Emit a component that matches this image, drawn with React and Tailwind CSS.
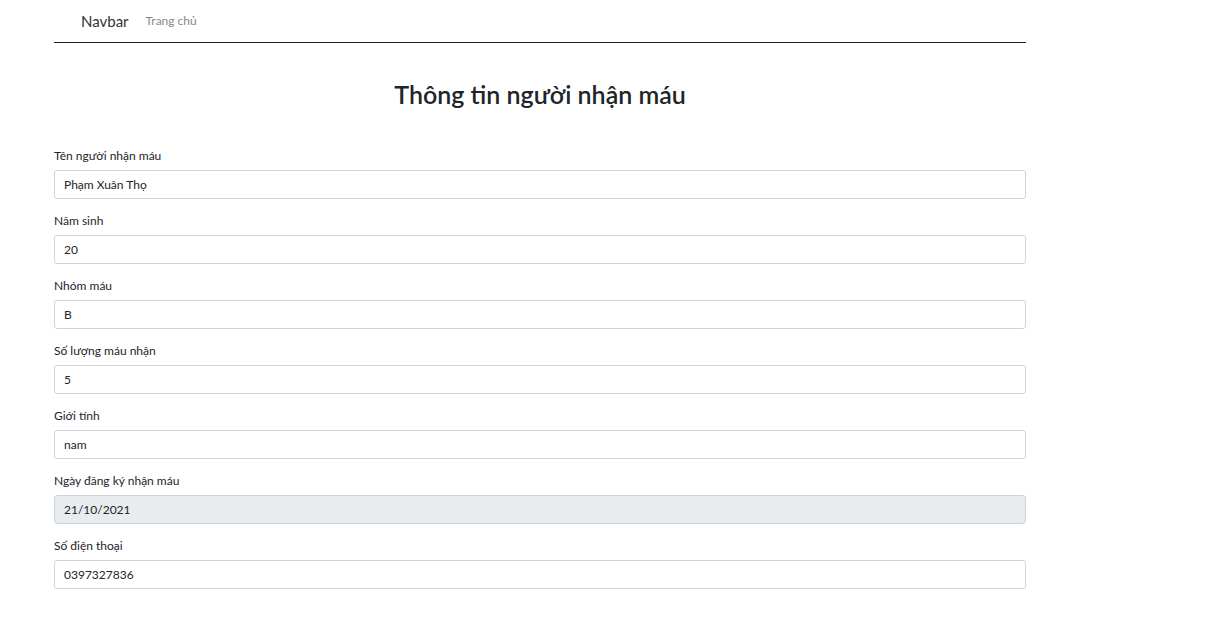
export default function App() {
  const fields = [
    { label: "Tên người nhận máu", value: "Phạm Xuân Thọ" },
    { label: "Năm sinh", value: "20" },
    { label: "Nhóm máu", value: "B" },
    { label: "Số lượng máu nhận", value: "5" },
    { label: "Giới tính", value: "nam" },
    { label: "Ngày đăng ký nhận máu", value: "21/10/2021", disabled: true },
    { label: "Số điện thoại", value: "0397327836" },
  ];
  return (
    <div className="min-h-[623px] w-[1220px] bg-white text-[#212529]" style={{ fontFamily: "Lato, 'Noto Sans', sans-serif" }}>
      <div className="ml-[54px] w-[972px]">
        <nav className="flex h-[43px] items-center border-b border-[#222] pl-[27px]">
          <span className="text-[15px] text-[#333]">Navbar</span>
          <span className="ml-[17px] text-[12px] text-[#888]">Trang chủ</span>
        </nav>
        <h1 className="mt-[35px] text-center text-[25px] font-semibold leading-[32px] text-[#212529]">Thông tin người nhận máu</h1>
        <div className="mt-[33px] flex flex-col">
          {fields.map((f) => (
            <div key={f.label} className="flex h-[65px] flex-col">
              <label className="h-[27px] text-[12px] leading-[25px] text-[#212529]">{f.label}</label>
              <div
                className={`flex h-[29px] items-center rounded-[3px] border border-[#ced4da] px-[9px] text-[12px] text-[#212529] ${f.disabled ? "bg-[#e9ecef]" : "bg-white"}`}
              >
                {f.value}
              </div>
            </div>
          ))}
        </div>
      </div>
    </div>
  );
}
